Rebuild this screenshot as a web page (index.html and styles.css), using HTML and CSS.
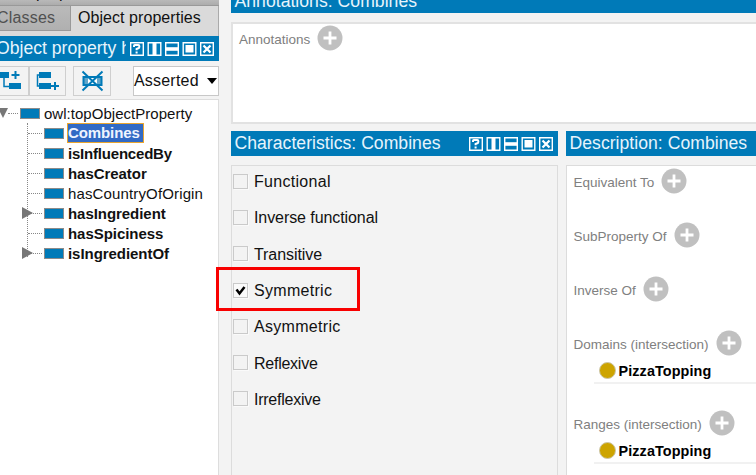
FILE: index.html
```
<!DOCTYPE html>
<html lang="en">
<head>
<meta charset="utf-8">
<title>Object properties</title>
<link rel="stylesheet" href="styles.css">
</head>
<body>
<svg class="defs" width="0" height="0">
  <symbol id="controls" viewBox="0 0 86 14">
    <g fill="none" stroke="#fff" stroke-width="1.4">
      <path d="M.7.7h12.6v12.6H.7zM18.2.7h12.6v12.6H18.2zM35.7.7h12.6v12.6H35.7zM53.2.7h12.6v12.6H53.2zM70.7.7h12.6v12.6H70.7z"/>
      <path d="M4 5V3.8q0-.8.8-.8h3.5q1 0 1 1v1q0 1-1 1.300L6.600 7v1.300M6.600 9.500v2" stroke-width="2"/>
      <path d="M24.500 1v12" stroke-width="4"/>
      <path d="M36 7h12" stroke-width="3.600"/>
      <path d="M73.500 3.500l7 7m0-7l-7 7" stroke-width="2.300"/>
    </g>
    <path fill="#fff" d="M55.500 3h8v7.500h-8z"/>
  </symbol>
  <symbol id="plus" viewBox="0 0 26 26">
    <circle cx="13" cy="13" r="12.500" fill="#c0c0c0"/>
    <path d="M13 6.500v13M6.500 13h13" stroke="#fff" stroke-width="2.800"/>
  </symbol>
</svg>
<div class="app">
  <div class="left">
    <div class="topstrip"><span>Annotation properties</span></div>
    <div class="tabs"><div class="tab off">Classes</div><div class="tab on">Object properties</div></div>
    <div class="head hierarchy"><span class="title">Object property hierarchy</span><svg class="controls"><use href="#controls"/></svg></div>
    <div class="toolbar">
      <div class="btn first"><svg width="28" height="29" viewBox="0 0 28 29"><path d="M0 5h9v6H0zM9 16h12v6H9z" fill="#007ab8"/><path d="M4 10v9.500h6" fill="none" stroke="#007ab8" stroke-width="1.500"/><path d="M15.500 4v8M11.500 8h8" stroke="#007ab8" stroke-width="2"/></svg></div>
      <div class="btn second"><svg width="36" height="29" viewBox="0 0 36 29"><path d="M9 5h12v6H9zM9 16h12v6H9z" fill="#007ab8"/><path d="M10 8H7.500v11H10" fill="none" stroke="#007ab8" stroke-width="1.500"/><path d="M25 15v8M21 19h8" stroke="#007ab8" stroke-width="2"/></svg></div>
      <div class="btn third"><svg width="36" height="29" viewBox="0 0 36 29"><path d="M9 10h5v8H9zM23 10h5v8h-5z" fill="#61a6ca"/><path d="M14 11h9v6.500h-9z" fill="#fff"/><path d="M9 10h19M9 18h19M9.500 9v10M27.500 9v10M8.500 4.500l20 19m0-19l-20 19" fill="none" stroke="#007ab8" stroke-width="2"/></svg></div>
      <div class="combo"><span>Asserted</span><i></i></div>
    </div>
    <div class="tree">
      <div class="row root"><i class="open"></i><i class="dots"></i><i class="bar"></i><span class="owl">owl:topObjectProperty</span></div>
      <div class="children">
        <div class="row"><i class="dots"></i><i class="bar"></i><b class="sel">Combines</b></div>
        <div class="row"><i class="dots"></i><i class="bar"></i><b>isInfluencedBy</b></div>
        <div class="row"><i class="dots"></i><i class="bar"></i><b class="creator">hasCreator</b></div>
        <div class="row"><i class="dots"></i><i class="bar"></i><span class="origin">hasCountryOfOrigin</span></div>
        <div class="row parent"><i class="dots"></i><i class="bar"></i><b class="creator">hasIngredient</b></div>
        <div class="row"><i class="dots"></i><i class="bar"></i><b class="creator">hasSpiciness</b></div>
        <div class="row parent"><i class="dots"></i><i class="bar"></i><b class="creator">isIngredientOf</b></div>
      </div>
    </div>
  </div>
  <div class="divider"></div>
  <div class="right">
    <div class="head annohead"><span class="title">Annotations: Combines</span></div>
    <div class="annobox"><div class="label"><span>Annotations</span><svg><use href="#plus"/></svg></div></div>
    <div class="panels">
      <div class="chars">
        <div class="head"><span class="title">Characteristics: Combines</span><svg class="controls"><use href="#controls"/></svg></div>
        <div class="charbox">
          <div class="check wide"><i></i><span>Functional</span></div>
          <div class="check"><i></i><span>Inverse functional</span></div>
          <div class="check"><i></i><span>Transitive</span></div>
          <div class="check wide marked"><i><svg width="13" height="13" viewBox="0 0 13 13"><path d="M2.500 5.500l3 4 5-6.500" fill="none" stroke="#000" stroke-width="2.500"/></svg></i><span>Symmetric</span></div>
          <div class="check wide"><i></i><span>Asymmetric</span></div>
          <div class="check tight"><i></i><span>Reflexive</span></div>
          <div class="check tight"><i></i><span>Irreflexive</span></div>
        </div>
      </div>
      <div class="desc">
        <div class="head"><span class="title">Description: Combines</span></div>
        <div class="descbox">
          <div class="section"><div class="label"><span>Equivalent To</span><svg><use href="#plus"/></svg></div></div>
          <div class="section"><div class="label"><span>SubProperty Of</span><svg><use href="#plus"/></svg></div></div>
          <div class="section"><div class="label"><span>Inverse Of</span><svg><use href="#plus"/></svg></div></div>
          <div class="section filled"><div class="label"><span>Domains (intersection)</span><svg><use href="#plus"/></svg></div><div class="cls"><i></i><b>PizzaTopping</b></div></div>
          <div class="section filled"><div class="label"><span>Ranges (intersection)</span><svg><use href="#plus"/></svg></div><div class="cls"><i></i><b>PizzaTopping</b></div></div>
        </div>
      </div>
    </div>
  </div>
</div>
</body>
</html>
```
FILE: styles.css
```
*, *::before, *::after { box-sizing: border-box; }
body { margin: 0; width: 756px; height: 475px; overflow: hidden; background: #f3f3f3; font: 16px "Liberation Sans", Arial, sans-serif; color: #111; }
.defs { position: absolute; }
.app { display: flex; width: 756px; height: 475px; }
svg { display: block; flex: none; }
.left { width: 219px; flex: none; overflow: hidden; display: flex; flex-direction: column; }
.topstrip { height: 6px; flex: none; background: linear-gradient(#b9b9b9, #acacac); border-bottom: 1px solid #999; overflow: hidden; }
.topstrip span { display: block; line-height: 18px; margin: -16px 0 0 -45px; white-space: nowrap; }
.tabs { height: 30px; flex: none; display: flex; background: #dadada; white-space: nowrap; line-height: 24px; }
.tab.off { width: 71px; height: 25px; background: linear-gradient(#bababa, #b0b0b0); border: solid #999; border-width: 0 1px 1px 0; color: #505050; text-indent: -3px; letter-spacing: .2px; }
.tab.on { flex: 1; height: 30px; padding-left: 7px; letter-spacing: .06px; background: linear-gradient(90deg, #dadada 99%, #aaa 99%); }
.head { height: 25px; flex: none; display: flex; align-items: center; background: #007ab8; color: #e7f4fc; font-size: 17.6px; white-space: nowrap; }
.title { overflow: hidden; }
.controls { width: 86px; height: 14px; margin-left: auto; }
.hierarchy .title { flex: none; width: 126px; text-indent: -4px; }
.hierarchy .controls { margin: 0 2px 0 4px; }
.toolbar { height: 38px; flex: none; display: flex; padding-top: 5px; }
.btn { height: 30px; border: 1px solid #cfcfcf; flex: none; }
.first { width: 29px; border-left: 0; }
.second { width: 37px; }
.third { width: 38px; margin-left: 7px; }
.combo { width: 86px; height: 30px; margin-left: 22px; background: #fff; border: 1px solid #c8c8c8; display: flex; align-items: center; letter-spacing: .2px; }
.combo i { border: 5px solid transparent; border-top: 6px solid #000; border-bottom: 0; margin-left: 8px; }
.tree { flex: 1; background: #fff; border: solid #ddd; border-width: 1px 1px 0 0; padding-top: 3px; font-size: 15px; }
.row { height: 20px; display: flex; align-items: center; white-space: nowrap; position: relative; letter-spacing: -.2px; }
.open { border: 5px solid transparent; border-top: 10px solid #777; border-bottom: 0; margin-left: -2px; }
.dots { width: 14px; border-top: 1px dotted #888; margin-right: 2px; }
.root .dots { width: 10px; }
.owl { letter-spacing: .03px; }
.origin { letter-spacing: .14px; }
.creator { letter-spacing: -.05px; }
.bar { width: 20px; height: 11px; background: #007ab8; border: 1px solid #8b8b8b; margin-right: 4px; }
.children { margin-left: 27px; border-left: 1px dotted #888; height: 134px; }
.sel { background: #316ac5; color: #eef4ff; outline: 1px solid #e9a52f; line-height: 18px; width: 75px; letter-spacing: -.1px; }
.parent::before { content: ""; position: absolute; left: -6px; border: 6px solid transparent; border-left: 11px solid #777; border-right: 0; }
.divider { width: 12px; flex: none; }
.right { flex: 1; min-width: 0; display: flex; flex-direction: column; }
.right .head .title { padding-left: 3.5px; letter-spacing: .03px; }
.right .annohead { height: 13px; overflow: hidden; }
.right .annohead .title { overflow: visible; margin-top: -10px; }
.annobox { margin-top: 9px; height: 102px; flex: none; background: #fff; border: 2px solid #e2e2e2; border-right: 0; padding: 1px 0 0 6px; }
.label { display: flex; align-items: center; height: 26px; color: #808080; font-size: 13.500px; gap: 7px; white-space: nowrap; }
.label svg { width: 26px; height: 26px; }
.label span { padding-top: 3px; }
.panels { display: flex; margin-top: 7px; flex: 1; gap: 8px; min-height: 0; }
.chars { width: 327px; flex: none; display: flex; flex-direction: column; }
.chars .controls { margin-right: 3px; }
.charbox { margin-top: 9px; flex: 1; border: 1px solid #dcdcdc; border-bottom: 0; padding: 0 0 0 1px; }
.check { height: 36.300px; display: flex; align-items: center; letter-spacing: -.08px; position: relative; top: -3px; }
.check span { padding-top: 2px; }
.wide { letter-spacing: .3px; }
.tight { letter-spacing: -.25px; }
.check i { width: 15px; height: 15px; border: 1px solid #cacaca; margin-right: 6px; box-shadow: 1px 1px #fafafa; }
.marked i { background: #fafafa; }
.marked::after { content: ""; position: absolute; left: -17px; top: -5px; width: 144px; height: 44px; border: 3px solid #f80000; }
.desc { flex: 1; min-width: 0; display: flex; flex-direction: column; }
.descbox { margin-top: 9px; flex: 1; background: #fff; border: solid #dcdcdc; border-width: 1px 0 0 1px; padding: 2px 0 0 6.5px; }
.section { height: 54px; }
.filled { height: 80px; }
.cls { margin: 3px 0 0 20px; height: 25px; border-bottom: 2px solid #f1f1f1; display: flex; align-items: center; font-size: 14.400px; color: #000; }
.cls i { width: 17px; height: 17px; border-radius: 50%; background: #cda400; border: 1px solid #ccc6a8; margin: 0 3px 0 5px; }
.cls b { letter-spacing: .1px; }
```
